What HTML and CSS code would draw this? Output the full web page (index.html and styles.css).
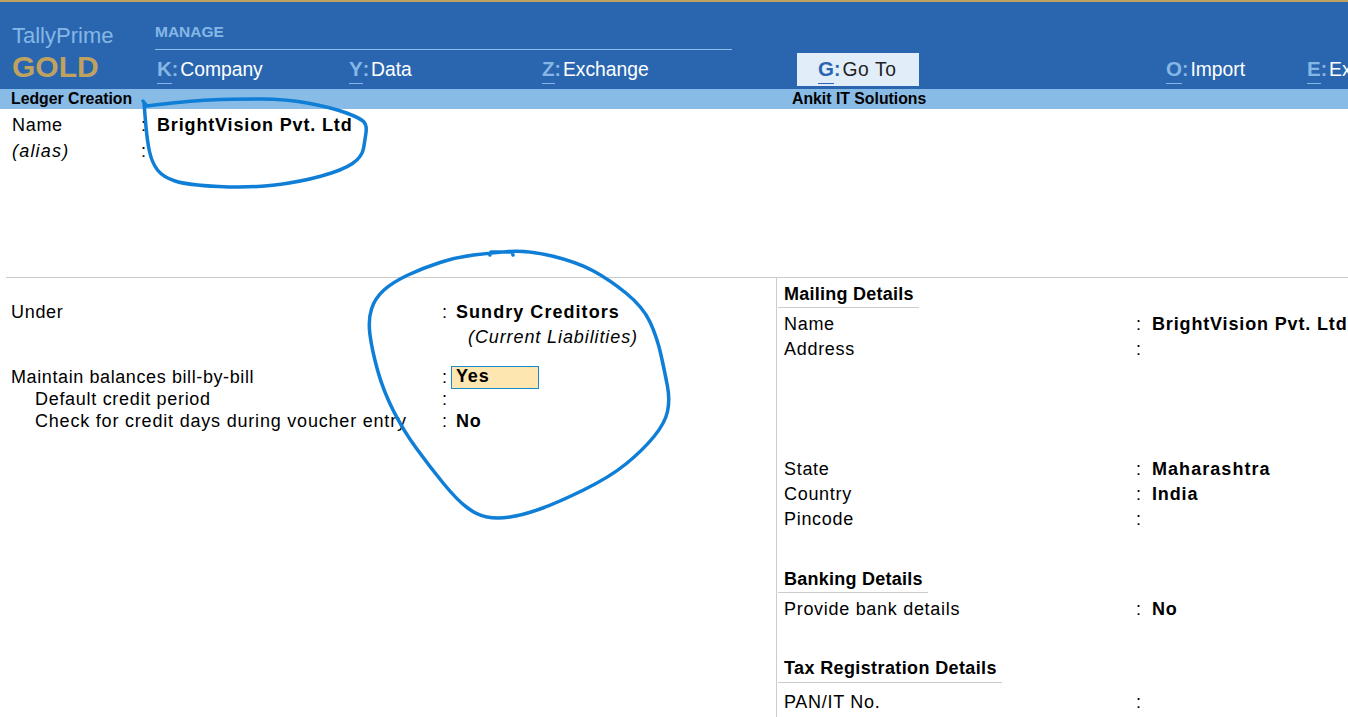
FILE: index.html
```html
<!DOCTYPE html>
<html lang="en">
<head>
<meta charset="utf-8">
<title>Ledger Creation</title>
<link rel="stylesheet" href="styles.css">
</head>
<body>
<div class="app">
  <header class="topbar">
    <div class="brand">
      <div class="brand-name">TallyPrime</div>
      <div class="brand-tier">GOLD</div>
    </div>
    <div class="menu">
      <div class="menu-title">MANAGE</div>
      <nav class="menu-row">
        <div class="item w-k"><span class="key">K</span><span class="sep">:</span>Company</div>
        <div class="item w-y"><span class="key">Y</span><span class="sep">:</span>Data</div>
        <div class="item w-z"><span class="key">Z</span><span class="sep">:</span>Exchange</div>
        <div class="item goto"><span class="key">G</span><span class="sep">:</span>Go To</div>
        <div class="item w-o"><span class="key">O</span><span class="sep">:</span>Import</div>
        <div class="item"><span class="key">E</span><span class="sep">:</span>Export</div>
      </nav>
    </div>
  </header>
  <div class="titlebar">
    <div class="title-left">Ledger Creation</div>
    <div>Ankit IT Solutions</div>
  </div>
  <section class="identity">
    <div class="row id-row"><span class="label">Name</span><span class="colon">:</span><b>BrightVision Pvt. Ltd</b></div>
    <div class="row id-row"><i class="label alias">(alias)</i><span class="colon">:</span></div>
  </section>
  <main class="columns">
    <section class="left">
      <div class="row l-row"><span class="label">Under</span><span class="colon">:</span><b class="wide">Sundry Creditors</b></div>
      <div class="parent"><i>(Current Liabilities)</i></div>
      <div class="row l-row tall"><span class="label tight">Maintain balances bill-by-bill</span><span class="colon">:</span><b class="field">Yes</b></div>
      <div class="row l-row short"><span class="label indent">Default credit period</span><span class="colon">:</span></div>
      <div class="row l-row"><span class="label indent loose">Check for credit days during voucher entry</span><span class="colon">:</span><b>No</b></div>
    </section>
    <section class="right">
      <h2 class="heading first">Mailing Details</h2>
      <div class="row r-row"><span class="label">Name</span><span class="colon">:</span><b>BrightVision Pvt. Ltd</b></div>
      <div class="row r-row"><span class="label">Address</span><span class="colon">:</span></div>
      <div class="row r-row gap-state"><span class="label">State</span><span class="colon">:</span><b class="wide">Maharashtra</b></div>
      <div class="row r-row"><span class="label">Country</span><span class="colon">:</span><b>India</b></div>
      <div class="row r-row"><span class="label">Pincode</span><span class="colon">:</span></div>
      <h2 class="heading bank">Banking Details</h2>
      <div class="row r-row"><span class="label">Provide bank details</span><span class="colon">:</span><b>No</b></div>
      <h2 class="heading tax">Tax Registration Details</h2>
      <div class="row r-row pan"><span class="label">PAN/IT No.</span><span class="colon">:</span></div>
    </section>
  </main>
  <svg class="ink" viewBox="0 0 1348 717" aria-hidden="true">
    <path d="M143 101 L147 106 Q187 101 210 100 Q233 99 260 99 Q287 99 310 103.500 Q333 108 346.500 113 Q360 118 363.500 121.500 Q367 125 366 132.500 Q365 140 363.500 148.500 Q362 157 352.500 163.500 Q343 170 321.500 176 Q300 182 275 185 Q250 188 218.500 186.500 Q187 185 175 181 Q163 177 157.500 170 Q152 163 149.500 151.500 Q147 140 145.500 121.500 L144 103"/>
    <path d="M473.500 255 Q490 253 508.500 251.500 Q527 250 552 256 Q577 262 593.500 271 Q610 280 626.500 293.500 Q643 307 650 322 Q657 337 661 355 Q665 373 667.500 386.500 Q670 400 667.500 411.500 Q665 423 654 436.500 Q643 450 626.500 463.500 Q610 477 583.500 490 Q557 503 540 509 Q523 515 510 517 Q497 519 487 517 Q477 515 467 507.500 Q457 500 443.500 483.500 Q430 467 416.500 448.500 Q403 430 393 410 Q383 390 377.500 370 Q372 350 370 335 Q368 320 371.500 309 Q375 298 384 290 Q393 282 408 275 Q423 268 440 262.500 Q457 257 473.500 255 Z M490 255 L491 252 L512 252 L513 255"/>
  </svg>
</div>
</body>
</html>
```

FILE: styles.css
```css
* { box-sizing: border-box; }
html, body { margin: 0; padding: 0; height: 100%; overflow: hidden; }
body { background: #fff; color: #000; font-family: "Liberation Sans", Arial, sans-serif; font-size: 18px; }
.app { position: relative; width: 1348px; height: 717px; overflow: hidden; }

.topbar { display: flex; height: 89px; background: #2a66b0; border-top: 2px solid #bfa25f; }
.brand { width: 155px; flex: none; padding: 22px 0 0 12px; }
.brand-name { color: #85b7e6; font-size: 22px; line-height: 24px; }
.brand-tier { padding-top: 1px; color: #bfa25f; font-size: 30px; font-weight: bold; line-height: 35px; }
.menu { flex: 1; min-width: 0; padding-top: 20px; }
.menu-title { width: 577px; height: 28px; border-bottom: 1px solid #8bbdea; color: #85b7e6; font-size: 15.500px; font-weight: bold; line-height: 20px; }
.menu-row { display: flex; height: 36px; padding-top: 3px; white-space: nowrap; }
.item { flex: none; padding-left: 2px; color: #fff; font-size: 19.300px; line-height: 34px; }
.w-k { width: 192px; }
.w-y { width: 193px; }
.w-z { width: 257px; }
.w-o { width: 141px; }
.goto { width: 122px; margin-right: 245px; padding-left: 21px; background: #e1eefa; color: #222; letter-spacing: .6px; }
.key { display: inline-block; height: 30px; border-bottom: 1px solid #85b7e6; color: #85b7e6; font-weight: bold; font-size: 20.500px; line-height: 30px; letter-spacing: 0; }
.sep { color: #85b7e6; font-weight: bold; margin-right: 2px; letter-spacing: 0; }
.goto .key { color: #2a66b0; border-bottom-color: #2a66b0; }
.goto .sep { color: #2a66b0; }

.titlebar { display: flex; height: 20px; padding-left: 11px; background: #88bbe6; font-size: 15.800px; font-weight: bold; line-height: 19px; white-space: nowrap; }
.title-left { width: 781px; flex: none; }

.identity { height: 169px; margin-left: 6px; padding: 3px 0 0 6px; border-bottom: 1px solid #ccc; }
.row { display: flex; white-space: nowrap; letter-spacing: .7px; }
.row b { letter-spacing: .85px; }
.row b.wide { letter-spacing: 1.050px; }
.label { flex: none; }
.colon { flex: none; letter-spacing: 0; }
.id-row { height: 26px; line-height: 26px; }
.id-row .label { width: 129px; }
.id-row .colon { width: 16px; }
.alias { letter-spacing: 1.200px; }

.columns { display: flex; height: 439px; }
.left { width: 776px; flex: none; padding: 23px 0 0 11px; }
.l-row { height: 23px; line-height: 23px; }
.l-row .label { width: 431px; }
.l-row .label.indent { padding-left: 24px; }
.l-row .label.tight { letter-spacing: .6px; }
.l-row .label.loose { letter-spacing: .8px; }
.l-row .colon { width: 14px; }
.parent { height: 27px; padding-left: 457px; line-height: 27px; letter-spacing: .9px; }
.tall { height: 22px; margin-top: 15px; }
.short { height: 22px; }
.row b.field { width: 88px; height: 23px; margin-left: -5px; padding-left: 4px; border: 1px solid #1a8ac8; background: #fde6b0; line-height: 19px; }
.right { flex: 1; min-width: 0; border-left: 1px solid #ccc; padding-left: 1px; }
.heading { display: table; margin: 0; padding: 0 5px 0 6px; border-bottom: 1px solid #ccc; font-size: 18px; font-weight: bold; line-height: 22px; letter-spacing: .25px; }
.heading.first { margin-top: 5px; margin-bottom: 4px; height: 25px; }
.heading.bank { margin-top: 33px; margin-bottom: 4px; height: 28px; padding-top: 3px; }
.heading.tax { margin-top: 32px; height: 29px; padding-top: 3px; letter-spacing: .38px; }
.r-row { height: 25px; padding-left: 6px; line-height: 25px; }
.r-row .label { width: 352px; }
.r-row .colon { width: 16px; }
.gap-state { margin-top: 95px; }
.pan { margin-top: 7px; }

.ink { position: absolute; top: 0; left: 0; width: 1348px; height: 717px; pointer-events: none; fill: none; stroke: #0f7ed6; stroke-width: 3.500px; stroke-linecap: round; stroke-linejoin: round; }
```
